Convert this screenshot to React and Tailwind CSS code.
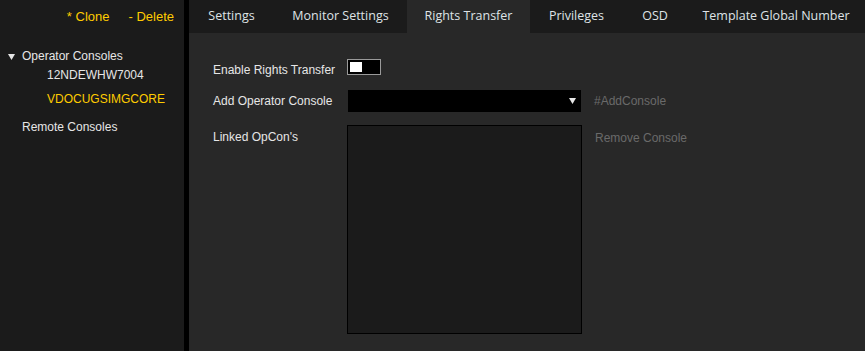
export default function App() {
  const tabs = [
    { label: "Settings", w: "w-[85px]" },
    { label: "Monitor Settings", w: "w-[133px]" },
    { label: "Rights Transfer", w: "w-[123px]", active: true },
    { label: "Privileges", w: "w-[93px]" },
    { label: "OSD", w: "w-[64px]" },
    { label: "Template Global Number", w: "flex-1" },
  ];
  return (
    <div className="w-[865px] h-[351px] flex overflow-hidden bg-[#282828] font-['Liberation_Sans',Arial,sans-serif]">
      <aside className="w-[184px] shrink-0 bg-[#1b1b1b] flex flex-col">
        <div className="h-[33px] flex items-center justify-end pr-[10px] gap-[19px] text-[13px] text-[#ffcc00] leading-none">
          <span>* Clone</span>
          <span>- Delete</span>
        </div>
        <div className="pt-[16px] text-[12px] leading-[14px] text-[#e6e6e6]">
          <div className="flex items-center h-[14px]">
            <span className="w-[22px] flex justify-end pr-[7px] pt-[2px]">
              <svg width="7" height="6" viewBox="0 0 7 6">
                <path d="M0 0 L7 0 L3.5 6 Z" fill="#e6e6e6" />
              </svg>
            </span>
            <span>Operator Consoles</span>
          </div>
          <div className="pl-[47px] mt-[5px] h-[14px]">12NDEWHW7004</div>
          <div className="pl-[47px] mt-[10px] h-[14px] text-[#ffcc00]">VDOCUGSIMGCORE</div>
          <div className="pl-[22px] mt-[14px] h-[14px]">Remote Consoles</div>
        </div>
      </aside>
      <div className="w-[5px] shrink-0 bg-black" />
      <main className="flex-1 flex flex-col min-w-0">
        <nav className="h-[33px] shrink-0 flex bg-[#1b1b1b] font-['Open_Sans',sans-serif] text-[12.5px] text-[#dfe3e6]">
          {tabs.map((t) => (
            <div
              key={t.label}
              className={`${t.w} flex items-center justify-center whitespace-nowrap ${t.active ? "bg-[#282828]" : ""}`}
            >
              {t.label}
            </div>
          ))}
        </nav>
        <section className="flex-1 pl-[24px] pt-[26px] text-[12px] leading-[14px] text-[#e6e6e6]">
          <div className="flex items-start h-[16px]">
            <span className="w-[134px] pt-[4px]">Enable Rights Transfer</span>
            <div className="w-[34px] h-[16px] border border-[#9a9a9a] bg-black p-[1px] pl-[2px] pt-[2px]">
              <div className="w-[12px] h-[10px] bg-white" />
            </div>
          </div>
          <div className="flex items-center h-[22px] mt-[15px]">
            <span className="w-[135px]">Add Operator Console</span>
            <div className="w-[233px] h-[22px] bg-black flex items-center justify-end pr-[5px]">
              <svg width="7" height="6" viewBox="0 0 7 6">
                <path d="M0 0 L7 0 L3.5 6 Z" fill="#e6e6e6" />
              </svg>
            </div>
            <span className="ml-[13px] text-[#6a6a6a]">#AddConsole</span>
          </div>
          <div className="flex items-start mt-[13px]">
            <span className="w-[134px] pt-[5px]">Linked OpCon's</span>
            <div className="w-[235px] h-[209px] bg-[#1b1b1b] border border-black" />
            <span className="ml-[13px] pt-[6px] text-[#6a6a6a]">Remove Console</span>
          </div>
        </section>
      </main>
    </div>
  );
}
